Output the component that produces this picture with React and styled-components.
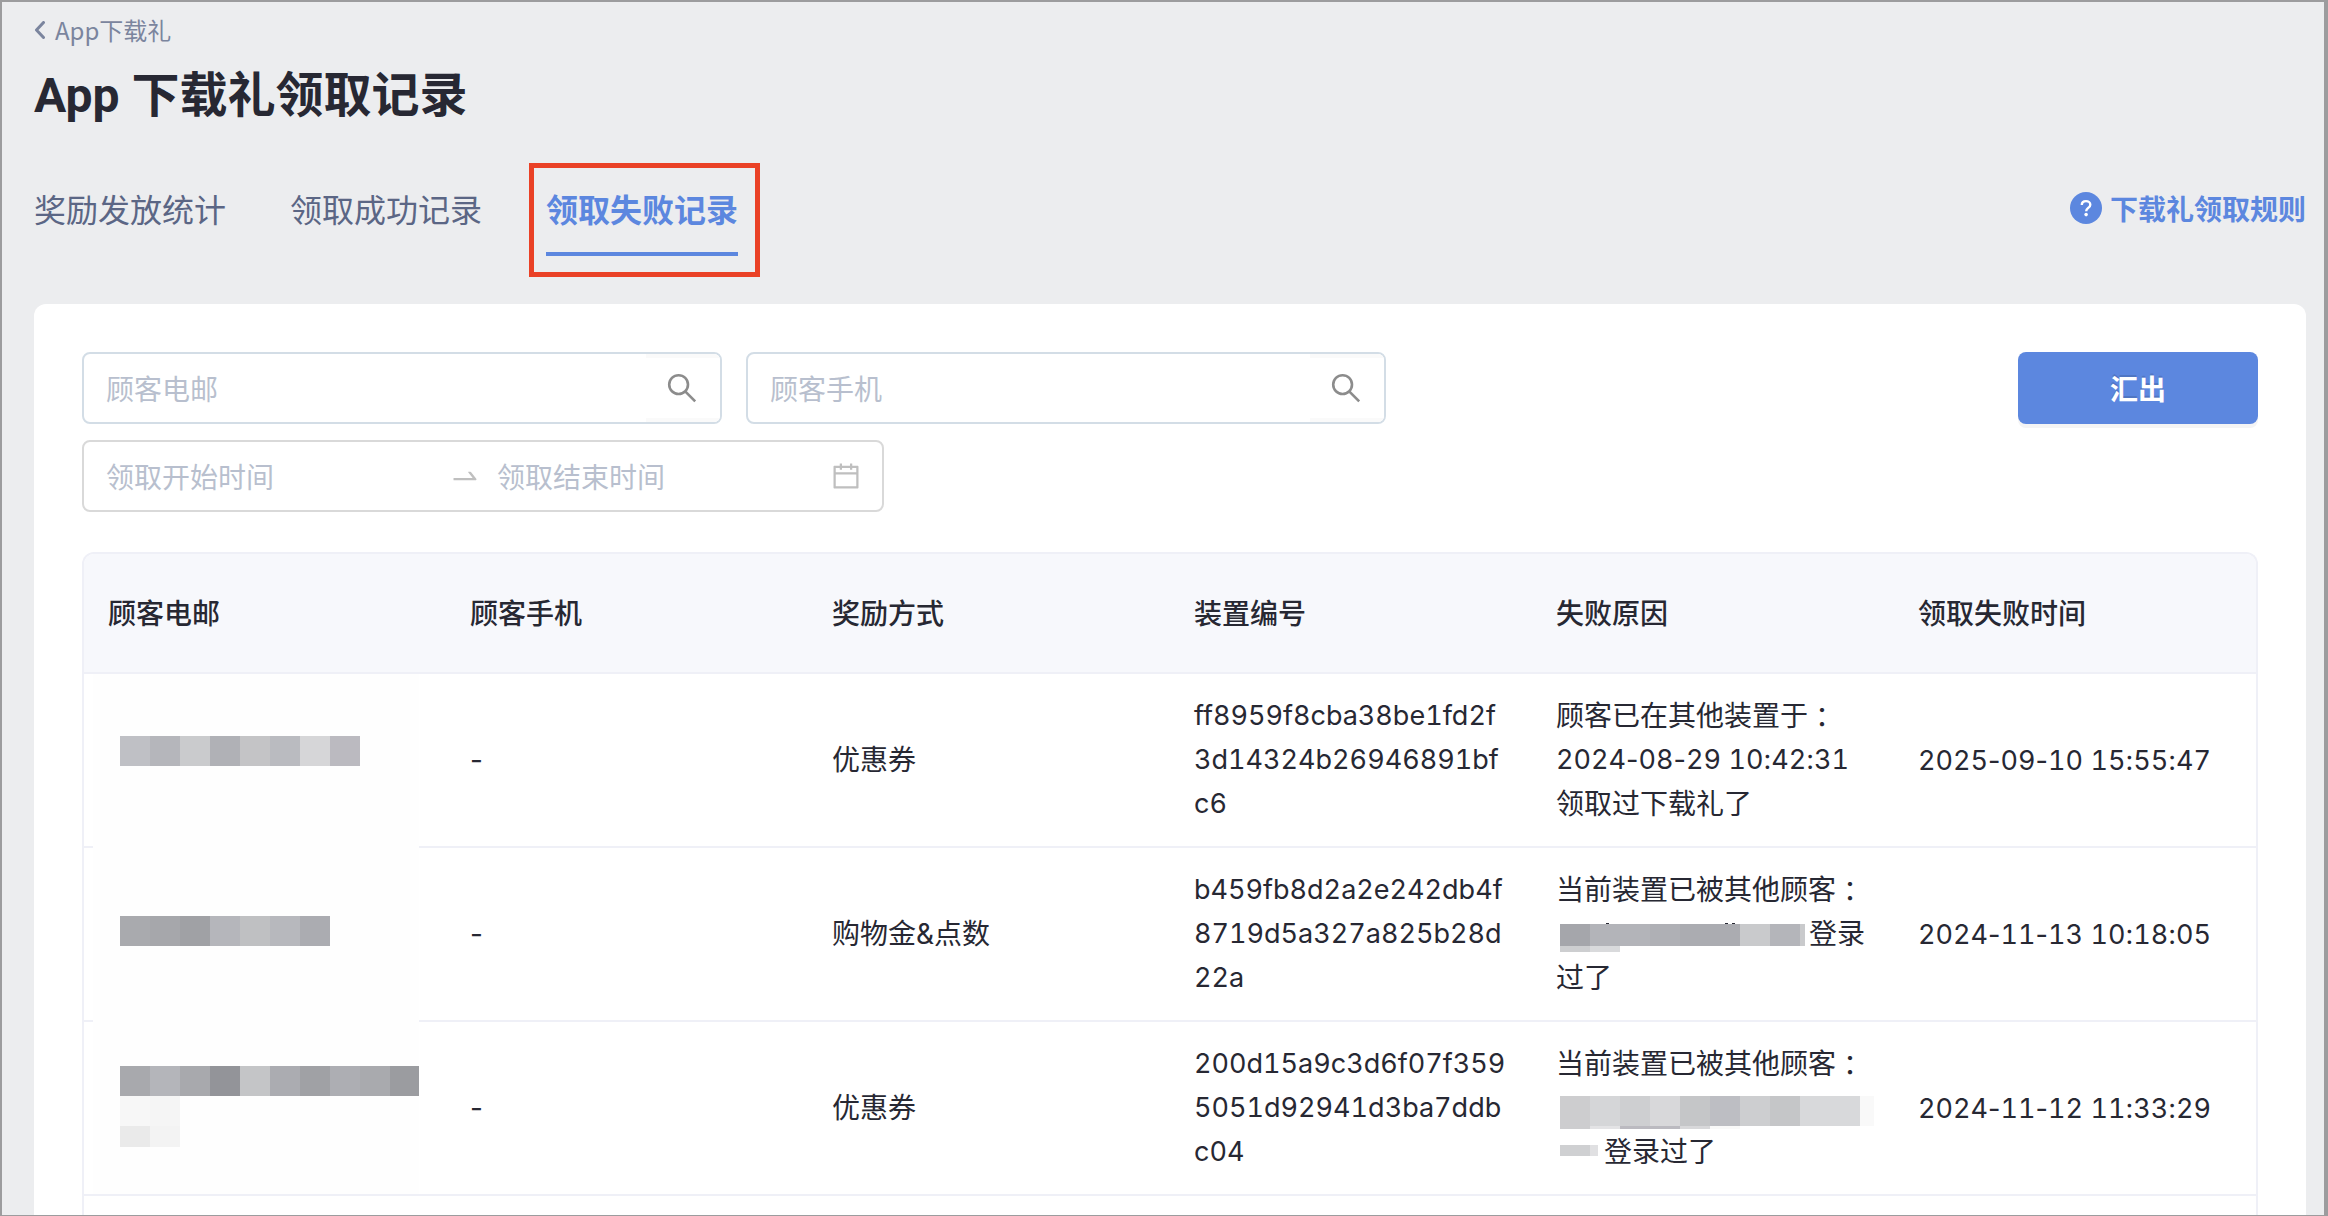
import React, { useState } from 'react';
import styled, { createGlobalStyle, css } from 'styled-components';

const GlobalStyle = createGlobalStyle`
    * {
        box-sizing: border-box;
    }

    body {
        margin: 0;
        background: #ecedef;
        color: #272833;
        font-family: "Noto Sans CJK SC", "Noto Sans", sans-serif;
    }

    button, input {
        font-family: inherit;
    }
`;

const Page = styled.div`
    display: flex;
    flex-direction: column;
    height: 100vh;
    overflow: hidden;
    padding: 8px 18px 0 32px;
    border: solid #9c9c9e;
    border-width: 2px 4px 1px 2px;
    background: #ecedef;
`;

const BackLink = styled.a`
    display: flex;
    align-items: center;
    align-self: flex-start;
    gap: 10px;
    color: #7b859e;
    font-size: 24px;
    line-height: 40px;
    text-decoration: none;
`;

const Title = styled.h1`
    margin: 14px 0 0;
    font-family: Roboto, "Noto Sans CJK SC", sans-serif;
    font-size: 48px;
    font-weight: 700;
    line-height: 64px;
`;

const TabBar = styled.div`
    display: flex;
    align-items: flex-start;
    justify-content: space-between;
    margin: 40px 0 48px;
`;

const TabList = styled.div`
    display: flex;
    gap: 64px;
`;

const Tab = styled.button`
    position: relative;
    height: 88px;
    padding: 0 0 4px;
    border: 0;
    border-bottom: 4px solid transparent;
    background: none;
    color: #5b6685;
    font-size: 32px;
    line-height: 80px;
    cursor: pointer;

    ${props => props.$active && css`
        border-bottom-color: #5c87df;
        color: #5c87df;
        font-weight: 700;
    `}
`;

const Highlight = styled.span`
    position: absolute;
    top: -5px;
    right: -22px;
    bottom: -25px;
    left: -17px;
    border: 5px solid #ea4126;
    pointer-events: none;
`;

const HelpLink = styled.a`
    display: flex;
    align-items: center;
    gap: 8px;
    color: #5c87df;
    font-size: 28px;
    font-weight: 700;
    line-height: 80px;
    text-decoration: none;
`;

const Panel = styled.main`
    display: flex;
    flex: 1;
    flex-direction: column;
    min-height: 0;
    padding: 48px 48px 0;
    border-radius: 12px 12px 0 0;
    background: #fff;
`;

const Toolbar = styled.div`
    display: flex;
    align-items: flex-start;
    justify-content: space-between;
    gap: 24px;
    margin-bottom: 40px;
`;

const Filters = styled.div`
    display: flex;
    flex-wrap: wrap;
    gap: 16px 24px;
    max-width: 1400px;
`;

const Field = styled.div`
    display: flex;
    align-items: center;
    width: ${props => props.$width};
    height: 72px;
    padding-left: 22px;
    border: 2px solid ${props => props.$border};
    border-radius: 8px;
    overflow: hidden;
`;

const RangeField = styled(Field)`
    padding-right: 20px;
    color: #bfbfbf;
`;

const TextInput = styled.input`
    flex: 1;
    min-width: 0;
    height: 100%;
    padding: 0;
    border: 0;
    outline: 0;
    background: none;
    color: #272833;
    font-size: 28px;

    &::placeholder {
        color: #b8bfce;
        opacity: 1;
    }
`;

const SearchButton = styled.button`
    display: flex;
    align-items: center;
    justify-content: flex-end;
    width: 74px;
    height: 100%;
    padding: 0 23px 0 0;
    border: solid #fafafa;
    border-width: 4px 0;
    background: #fff;
    color: #8c8c8c;
    cursor: pointer;
`;

const Separator = styled.span`
    display: flex;
    padding: 0 16px;
`;

const CalendarSlot = styled.span`
    display: flex;
    margin-left: 6px;
`;

const ExportButton = styled.button`
    flex: none;
    width: 240px;
    height: 72px;
    padding: 0;
    border: 0;
    border-radius: 8px;
    background: #5c87df;
    box-shadow: 0 4px 0 #f4f4f5;
    color: #fff;
    font-size: 28px;
    font-weight: 700;
    text-shadow: 0 -2px 0 rgba(0, 0, 0, 0.12);
    cursor: pointer;
`;

const TableFrame = styled.div`
    flex: 1;
    min-height: 0;
    overflow: hidden;
    border: 2px solid #eff0f7;
    border-bottom: 0;
    border-radius: 12px 12px 0 0;
`;

const Table = styled.table`
    width: 100%;
    table-layout: fixed;
    border-collapse: separate;
    border-spacing: 0;
    font-family: Inter, "Noto Sans CJK SC", sans-serif;
    font-size: 28px;
    line-height: 44px;
`;

const HeadCell = styled.th`
    height: 120px;
    padding: 2px 24px 0;
    border-bottom: 2px solid #eff0f7;
    background: #f7f8fc;
    font-weight: 500;
    text-align: left;
`;

const Cell = styled.td`
    position: relative;
    padding: 20px 24px;
    border-bottom: 2px solid #eff0f7;
`;

const Line = styled.div`
    display: flex;
    height: 44px;
    white-space: nowrap;
`;

// full-width colon sits in the middle of its box, as in the traditional fonts
const Colon = styled.span`
    font-family: "Noto Sans CJK TC", sans-serif;
`;

const Code = styled.span`
    font-size: 27px;
    font-variant-numeric: tabular-nums;
`;

const Time = styled.time`
    font-size: 27px;
    white-space: nowrap;
`;

const Digits = styled.span`
    font-variant-numeric: tabular-nums;
`;

// covers the e-mail and, where the patch is taller than the row, its bottom rule
const EmailCover = styled.div`
    position: absolute;
    z-index: 1;
    top: 0;
    bottom: ${props => (props.$overRule ? '-2px' : '0')};
    left: 9px;
    width: 326px;
    padding: ${props => props.$top} 0 0 27px;
    background: #fefefe;
`;

const MosaicSvg = styled.svg`
    display: block;
    flex: none;
    overflow: visible;
`;

// tiles: [x, y, width, height, fill]
const Mosaic = ({ width, height, tiles }) => (
    <MosaicSvg width={width} height={height} shapeRendering="crispEdges" aria-hidden="true">
        {tiles.map(([x, y, w, h, fill]) => (
            <rect key={`${x}-${y}`} x={x} y={y} width={w} height={h} fill={fill} />
        ))}
    </MosaicSvg>
);

const strip = (fills, y = 0, h = 30, x = 0) => fills.map((fill, i) => [x + i * 30, y, 30, h, fill]);

// only the digits are tabular, the dashes and colons keep their own widths
const DateTime = ({ value }) => (
    <Time dateTime={value}>
        {value.split(/(\d+)/).map((part, i) => (i % 2 ? <Digits key={i}>{part}</Digits> : part))}
    </Time>
);

const BackIcon = () => (
    <svg width="11" height="18" viewBox="0 0 11 18" fill="none" stroke="currentColor" strokeWidth="3" aria-hidden="true">
        <path d="M9.5 1.5 2.5 9l7 7.5" strokeLinecap="round" strokeLinejoin="round" />
    </svg>
);

const HelpIcon = () => (
    <svg width="32" height="32" viewBox="0 0 32 32" fill="none" aria-hidden="true">
        <circle cx="16" cy="16" r="16" fill="currentColor" />
        <path d="M11.8 13c0-2.4 1.8-3.9 4.2-3.9s4.3 1.4 4.3 3.6c0 1.6-.9 2.4-2.2 3.3-1.3.9-1.9 1.5-1.9 3.2" stroke="#fff" strokeWidth="2.4" />
        <circle cx="16.1" cy="22.6" r="1.8" fill="#fff" />
    </svg>
);

const SearchIcon = () => (
    <svg width="30" height="30" viewBox="0 0 30 30" fill="none" stroke="currentColor" strokeWidth="2.6" aria-hidden="true">
        <circle cx="11.6" cy="11.6" r="9.4" />
        <path d="m18.2 18.4 10 10" />
    </svg>
);

const ArrowIcon = () => (
    <svg width="32" height="32" viewBox="0 0 1024 1024" fill="currentColor" aria-hidden="true">
        <path d="M873.1 596.2l-164-208A32 32 0 00684 376h-64.8c-6.7 0-10.4 7.7-6.3 13l144.3 183H152c-4.4 0-8 3.6-8 8v60c0 4.4 3.6 8 8 8h695.9c26.8 0 41.7-30.8 25.2-51.8z" />
    </svg>
);

const CalendarIcon = () => (
    <svg width="32" height="32" viewBox="0 0 1024 1024" fill="currentColor" aria-hidden="true">
        <path d="M880 184H712v-64c0-4.4-3.6-8-8-8h-56c-4.4 0-8 3.6-8 8v64H384v-64c0-4.4-3.6-8-8-8h-56c-4.4 0-8 3.6-8 8v64H144c-17.7 0-32 14.3-32 32v664c0 17.7 14.3 32 32 32h736c17.7 0 32-14.3 32-32V216c0-17.7-14.3-32-32-32zm-40 656H184V460h656v380zM184 392V256h128v48c0 4.4 3.6 8 8 8h56c4.4 0 8-3.6 8-8v-48h256v48c0 4.4 3.6 8 8 8h56c4.4 0 8-3.6 8-8v-48h128v136H184z" />
    </svg>
);

const TABS = ['奖励发放统计', '领取成功记录', '领取失败记录'];
const COLUMNS = ['顾客电邮', '顾客手机', '奖励方式', '装置编号', '失败原因', '领取失败时间'];

const ROWS = [
    {
        coverTop: '62px',
        overRule: true,
        email: {
            width: 240,
            height: 30,
            tiles: strip(['#bfc0c5', '#b5b6bb', '#cacbcd', '#b0b1b6', '#c4c4c6', '#babbc0', '#d6d6d8', '#bbbac0']),
        },
        reward: '优惠券',
        device: ['ff8959f8cba38be1fd2f', '3d14324b26946891bf', 'c6'],
        reason: (
            <>
                <Line>顾客已在其他装置于<Colon>：</Colon></Line>
                <Line><DateTime value="2024-08-29 10:42:31" /></Line>
                <Line>领取过下载礼了</Line>
            </>
        ),
        time: '2025-09-10 15:55:47',
    },
    {
        coverTop: '68px',
        overRule: true,
        email: {
            width: 210,
            height: 30,
            tiles: strip(['#a9aaae', '#a6a7ab', '#a0a1a5', '#b5b6bb', '#bfc0c2', '#b7b8bd', '#abacb1']),
        },
        reward: '购物金&点数',
        device: ['b459fb8d2a2e242db4f', '8719d5a327a825b28d', '22a'],
        reason: (
            <>
                <Line>当前装置已被其他顾客<Colon>：</Colon></Line>
                <Line>
                    <Mosaic
                        width={253}
                        height={44}
                        tiles={[
                            [50, 11, 3, 1, '#272833'],
                            [169, 11, 3, 1, '#272833'],
                            [176, 11, 3, 1, '#272833'],
                            ...strip(['#a5a6ab', '#b3b4b9', '#b3b4b9', '#afb0b5', '#abacb1', '#abacb1', '#c9cacc', '#b4b5ba'], 12, 22, 4),
                            [244, 12, 5, 22, '#c9cacc'],
                            [4, 34, 30, 6, '#cdced0'],
                            [34, 34, 30, 6, '#d9dadc'],
                        ]}
                    />
                    登录
                </Line>
                <Line>过了</Line>
            </>
        ),
        time: '2024-11-13 10:18:05',
    },
    {
        coverTop: '44px',
        email: {
            width: 299,
            height: 81,
            tiles: [
                ...strip(['#a8a9ad', '#b4b5ba', '#a8a9ad', '#939499', '#c4c5c7', '#abacb1', '#a0a1a5', '#adaeb3', '#a9aaae']),
                [270, 0, 29, 30, '#9b9ca0'],
                ...strip(['#f7f7f7', '#f5f5f5'], 30),
                ...strip(['#eaeaea', '#f3f3f3'], 60, 21),
            ],
        },
        reward: '优惠券',
        device: ['200d15a9c3d6f07f359', '5051d92941d3ba7ddb', 'c04'],
        reason: (
            <>
                <Line>当前装置已被其他顾客<Colon>：</Colon></Line>
                <Line>
                    <Mosaic
                        width={314}
                        height={44}
                        tiles={[
                            ...strip(['#cdcdcf', '#d5d6d8', '#cecfd1', '#d8d8da', '#c5c6c8', '#bdbec3', '#cdced0', '#c5c6c8', '#d8d9db', '#d8d9db'], 10, 30, 4),
                            [304, 10, 14, 30, '#f9f9f9'],
                            [4, 40, 30, 3, '#cdcdcf'],
                            [34, 40, 30, 3, '#e3e3e5'],
                            [64, 40, 60, 3, '#bbbac0'],
                            [124, 40, 30, 3, '#d8d8da'],
                            [154, 40, 30, 3, '#f9f9f9'],
                        ]}
                    />
                </Line>
                <Line>
                    <Mosaic width={48} height={44} tiles={[[4, 15, 30, 11, '#cfd0d2'], [34, 15, 8, 11, '#e0e0e2']]} />
                    登录过了
                </Line>
            </>
        ),
        time: '2024-11-12 11:33:29',
    },
];

const SearchField = ({ label }) => (
    <Field $width="640px" $border="#d3dde6">
        <TextInput type="text" placeholder={label} aria-label={label} />
        <SearchButton type="button" aria-label={`搜索${label}`}>
            <SearchIcon />
        </SearchButton>
    </Field>
);

const App = () => {
    const [activeTab, setActiveTab] = useState(2);

    return (
        <Page>
            <GlobalStyle />
            <BackLink href="#">
                <BackIcon />
                App下载礼
            </BackLink>
            <Title>App 下载礼领取记录</Title>
            <TabBar>
                <TabList role="tablist">
                    {TABS.map((tab, i) => (
                        <Tab
                            key={tab}
                            type="button"
                            role="tab"
                            aria-selected={i === activeTab}
                            $active={i === activeTab}
                            onClick={() => setActiveTab(i)}
                        >
                            {tab}
                            {i === activeTab && <Highlight />}
                        </Tab>
                    ))}
                </TabList>
                <HelpLink href="#">
                    <HelpIcon />
                    下载礼领取规则
                </HelpLink>
            </TabBar>
            <Panel>
                <Toolbar>
                    <Filters>
                        <SearchField label="顾客电邮" />
                        <SearchField label="顾客手机" />
                        <RangeField $width="802px" $border="#d9d9d9">
                            <TextInput type="text" placeholder="领取开始时间" aria-label="领取开始时间" />
                            <Separator><ArrowIcon /></Separator>
                            <TextInput type="text" placeholder="领取结束时间" aria-label="领取结束时间" />
                            <CalendarSlot><CalendarIcon /></CalendarSlot>
                        </RangeField>
                    </Filters>
                    <ExportButton type="button">汇出</ExportButton>
                </Toolbar>
                <TableFrame>
                    <Table>
                        <thead>
                            <tr>
                                {COLUMNS.map(column => <HeadCell key={column} scope="col">{column}</HeadCell>)}
                            </tr>
                        </thead>
                        <tbody>
                            {ROWS.map(row => (
                                <tr key={row.time}>
                                    <Cell>
                                        <EmailCover $top={row.coverTop} $overRule={row.overRule}>
                                            <Mosaic {...row.email} />
                                        </EmailCover>
                                    </Cell>
                                    <Cell>-</Cell>
                                    <Cell>{row.reward}</Cell>
                                    <Cell>{row.device.map(part => <Line key={part}><Code>{part}</Code></Line>)}</Cell>
                                    <Cell>{row.reason}</Cell>
                                    <Cell><DateTime value={row.time} /></Cell>
                                </tr>
                            ))}
                        </tbody>
                    </Table>
                </TableFrame>
            </Panel>
        </Page>
    );
};

export default App;
